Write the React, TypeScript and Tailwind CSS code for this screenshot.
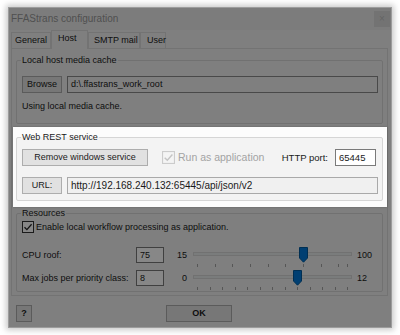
import React from "react";

type Kids = { children?: React.ReactNode; className?: string };

function Btn({ children, className = "" }: Kids) {
  return (
    <div
      className={`flex h-[17px] items-center justify-center border border-[#adadad] bg-[#e1e1e1] text-[9px] leading-none text-[#1a1a1a] ${className}`}
    >
      {children}
    </div>
  );
}

function Field({ children, className = "" }: Kids) {
  return (
    <div className={`flex h-[17px] items-center border px-[3px] leading-none ${className}`}>
      {children}
    </div>
  );
}

function Group({ title, children, className = "" }: Kids & { title: string }) {
  return (
    <fieldset className={`rounded-[2px] border border-[#d5d5d5] pl-[5px] pr-[4px] ${className}`}>
      <legend className="-ml-[1px] px-[1px] text-[9px] leading-[12px] text-[#1a1a1a]">{title}</legend>
      {children}
    </fieldset>
  );
}

function Check({ disabled = false }: { disabled?: boolean }) {
  const c = disabled ? "#c4c4c4" : "#222222";
  return (
    <svg width={disabled ? 13 : 12} height={disabled ? 13 : 12} viewBox="0 0 12 12" className="shrink-0">
      <rect x="0.5" y="0.5" width="11" height="11" fill={disabled ? "#f4f4f4" : "#ffffff"} stroke={disabled ? "#cccccc" : "#333333"} />
      <path d="M2.5 6.2 L4.9 8.6 L9.6 3.2" fill="none" stroke={c} strokeWidth="1.3" />
    </svg>
  );
}

function Slider({ min, max, value, ticks }: { min: number; max: number; value: number; ticks: number[] }) {
  const pos = (v: number) => 4 + ((v - min) / (max - min)) * 150;
  return (
    <div className="relative ml-[5px] h-[16px] w-[159px]">
      <div className="mt-[5px] h-[4px] border border-[#d6d6d6] bg-[#e7eaea]" />
      {ticks.map((t) => (
        <div key={t} className="absolute top-[17px] h-[3px] w-px bg-[#a3a3a3]" style={{ left: pos(t) }} />
      ))}
      <svg width="9" height="16" viewBox="0 0 9 16" className="absolute top-0" style={{ left: pos(value) - 4 }}>
        <path d="M0.5 0.5 H8.5 V11 L4.5 15.2 L0.5 11 Z" fill="#0078d7" stroke="#005a9e" />
      </svg>
    </div>
  );
}

function SliderRow({
  label,
  value,
  min,
  max,
  ticks,
  className = "",
}: {
  label: string;
  value: number;
  min: number;
  max: number;
  ticks: number[];
  className?: string;
}) {
  return (
    <div className={`flex h-[16px] items-center text-[9px] leading-none ${className}`}>
      <span className="w-[114px]">{label}</span>
      <div className="flex h-[16px] w-[28px] items-center border border-[#7a7a7a] bg-white px-[3px]">{value}</div>
      <span className="w-[24px] pr-[1px] text-right">{min}</span>
      <Slider min={min} max={max} value={value} ticks={ticks} />
      <span className="ml-[5px]">{max}</span>
    </div>
  );
}

export default function App() {
  const tabs = [
    { name: "General", w: "w-[40px] pl-[3px]" },
    { name: "Host", w: "w-[37px] pl-[6px]", active: true },
    { name: "SMTP mail", w: "w-[52px] pl-[5px]" },
    { name: "User", w: "w-[26px] pl-[6px]" },
  ];

  return (
    <div className="h-[335px] w-[400px] overflow-hidden bg-white pl-[8px] pt-[7px] font-['Liberation_Sans',Arial,sans-serif] text-[#1a1a1a] [font-variant-ligatures:none]">
      <div className="relative flex h-[321px] w-[384px] flex-col border border-[#9c9c9c] bg-[#f0f0f0] shadow-[0_0_6px_2px_rgba(0,0,0,0.22)]">
        {/* title bar */}
        <div className="flex h-[22px] items-center justify-between bg-[#ebebeb] pl-[2px] pr-[1px]">
          <span className="text-[10px] leading-none text-[#979797]">FFAStrans configuration</span>
          <div className="flex h-[16px] w-[16px] items-center justify-center bg-[#dadada] text-[10px] leading-none text-[#bdbdbd]">
            ×
          </div>
        </div>

        {/* tabs */}
        <div className="flex h-[18px] items-end pl-[2px]">
          {tabs.map((t) => (
            <div
              key={t.name}
              className={`flex items-center border border-b-0 border-[#d9d9d9] bg-[#f0f0f0] text-[9px] leading-none ${t.w} ${
                t.active ? "relative -mb-px h-[19px] pb-[3px]" : "h-[16px]"
              }`}
            >
              {t.name}
            </div>
          ))}
        </div>

        {/* tab page */}
        <div className="ml-[2px] mr-[3px] border border-[#d9d9d9] bg-[#f0f0f0] pb-[3px] pl-[4px] pr-[4px] pt-[5px]">
          <Group title="Local host media cache" className="pb-[11px]">
            <div className="flex pt-[10px]">
              <Btn className="w-[40px]">Browse</Btn>
              <Field className="ml-[5px] flex-1 border-[#8a8a8a] bg-[#f0f0f0] text-[9px]">d:\.ffastrans_work_root</Field>
            </div>
            <div className="mt-[7px] text-[9px] leading-[12px]">Using local media cache.</div>
          </Group>

          {/* highlighted section */}
          <div className="relative z-10 -ml-[3px] -mr-[4px] mt-[3px] bg-[#fcfcfc] pb-[6px] pl-[3px] pr-[4px] pt-[4px] shadow-[0_0_2px_rgba(0,0,0,0.25)]">
            <Group title="Web REST service" className="bg-[#f3f3f3] pb-[6px]">
              <div className="flex items-center pt-[6px]">
                <Btn className="w-[126px]">Remove windows service</Btn>
                <div className="ml-[14px] flex items-center">
                  <Check disabled />
                  <span className="ml-[3px] text-[10.5px] leading-none text-[#a3a3a3]">Run as application</span>
                </div>
                <span className="ml-auto text-[9.5px] leading-none">HTTP port:</span>
                <Field className="ml-[7px] mr-[2px] w-[41px] border-[#7a7a7a] bg-white text-[9.5px]">65445</Field>
              </div>
              <div className="mt-[11px] flex">
                <Btn className="w-[40px]">URL:</Btn>
                <Field className="ml-[5px] flex-1 border-[#a9a9a9] bg-[#f0f0f0] text-[10px]">
                  http://192.168.240.132:65445/api/json/v2
                </Field>
              </div>
            </Group>
          </div>

          <Group title="Resources" className="pb-[5px]">
            <div className="mt-[2px] flex h-[12px] items-center">
              <Check />
              <span className="ml-[2px] text-[9px] leading-none">Enable local workflow processing as application.</span>
            </div>
            <SliderRow
              className="mt-[14px]"
              label="CPU roof:"
              value={75}
              min={15}
              max={100}
              ticks={[15, 25, 35, 45, 55, 65, 75, 85, 95, 100]}
            />
            <SliderRow
              className="mt-[7px]"
              label="Max jobs per priority class:"
              value={8}
              min={0}
              max={12}
              ticks={[0, 1, 2, 3, 4, 5, 6, 7, 8, 9, 10, 11, 12]}
            />
          </Group>
        </div>

        {/* button bar */}
        <div className="flex flex-1 items-start pl-[7px] pt-[9px]">
          <Btn className="w-[16px] font-bold">?</Btn>
          <Btn className="ml-[134px] w-[66px] border-[#0078d7] font-bold">OK</Btn>
        </div>

        {/* dimming layer */}
        <div className="pointer-events-none absolute inset-0 bg-black/[0.47]" />
      </div>
    </div>
  );
}
